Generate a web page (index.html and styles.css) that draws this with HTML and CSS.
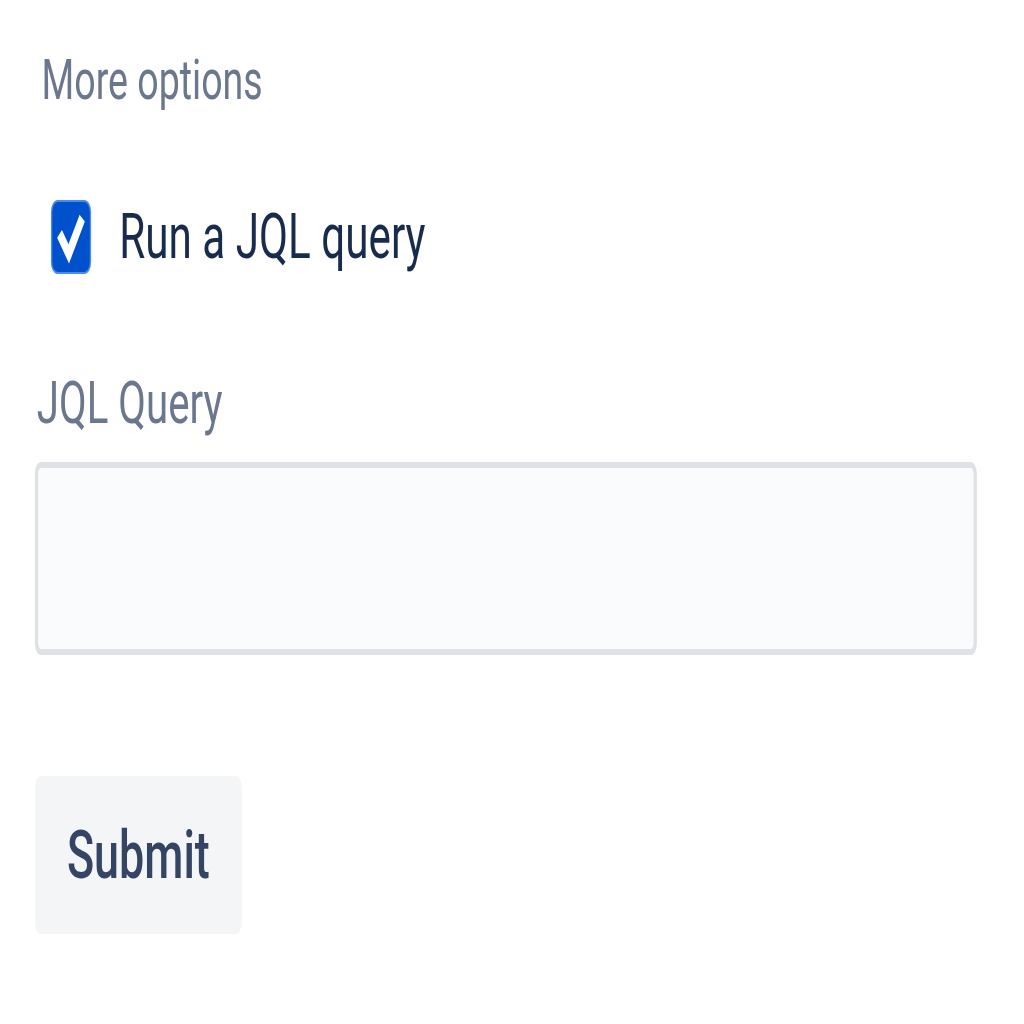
FILE: index.html
```html
<!DOCTYPE html>
<html lang="en">
<head>
<meta charset="utf-8">
<title>Options</title>
<link rel="stylesheet" href="styles.css">
</head>
<body>
<div class="frame">
  <div class="page">
    <div class="more">More options</div>
    <label class="check-row">
      <span class="checkbox">
        <svg viewBox="0 0 10 10" preserveAspectRatio="none" width="56" height="70">
          <path d="M2.5 5.2 L4.4 7.4 L7.5 3.0" fill="none" stroke="#ffffff" stroke-width="1.7" stroke-linecap="square" stroke-linejoin="miter"/>
        </svg>
      </span>
      <span class="check-label">Run a JQL query</span>
    </label>
    <div class="field-label">JQL Query</div>
    <textarea class="query"></textarea>
    <button class="submit" type="button">Submit</button>
  </div>
</div>
</body>
</html>
```
FILE: styles.css
```css
html, body {
  margin: 0;
  padding: 0;
  background: #ffffff;
}

body {
  font-family: Roboto, "Liberation Sans", sans-serif;
  overflow: hidden;
}

.frame {
  width: 1024px;
  height: 1024px;
  overflow: hidden;
}

.page {
  width: 1528px;
  box-sizing: border-box;
  padding: 47px 0 0 52px;
  transform: scaleX(0.67);
  transform-origin: 0 0;
  display: flex;
  flex-direction: column;
  align-items: flex-start;
}

.more {
  margin-left: 10px;
  font-size: 56px;
  line-height: 67px;
  color: #6b778c;
}

.check-row {
  margin-top: 85px;
  margin-left: 26px;
  display: flex;
  align-items: center;
  gap: 44px;
}

.checkbox {
  width: 56px;
  height: 70px;
  background: #0052cc;
  border-radius: 8px / 10px;
  box-shadow: 0 0 0 2px #4c8bf0;
  display: block;
}

.checkbox svg {
  display: block;
}

.check-label {
  font-size: 63px;
  line-height: 76px;
  color: #172b4d;
}

.field-label {
  margin-top: 92px;
  margin-left: 3px;
  font-size: 60px;
  line-height: 72px;
  color: #6b778c;
}

.query {
  margin-top: 23px;
  display: block;
  width: 1406px;
  height: 193px;
  box-sizing: border-box;
  border-style: solid;
  border-color: #dfe1e6;
  border-width: 6px 5px;
  border-radius: 9px / 12px;
  background: #fafbfc;
  resize: none;
  outline: none;
  padding: 0;
  font-family: inherit;
}

.submit {
  margin-top: 121px;
  width: 309px;
  height: 158px;
  border: none;
  border-radius: 9px / 12px;
  background: #f4f5f7;
  color: #344563;
  font-family: inherit;
  font-size: 67px;
  font-weight: 500;
  padding: 0;
  display: flex;
  align-items: center;
  justify-content: center;
}
```
